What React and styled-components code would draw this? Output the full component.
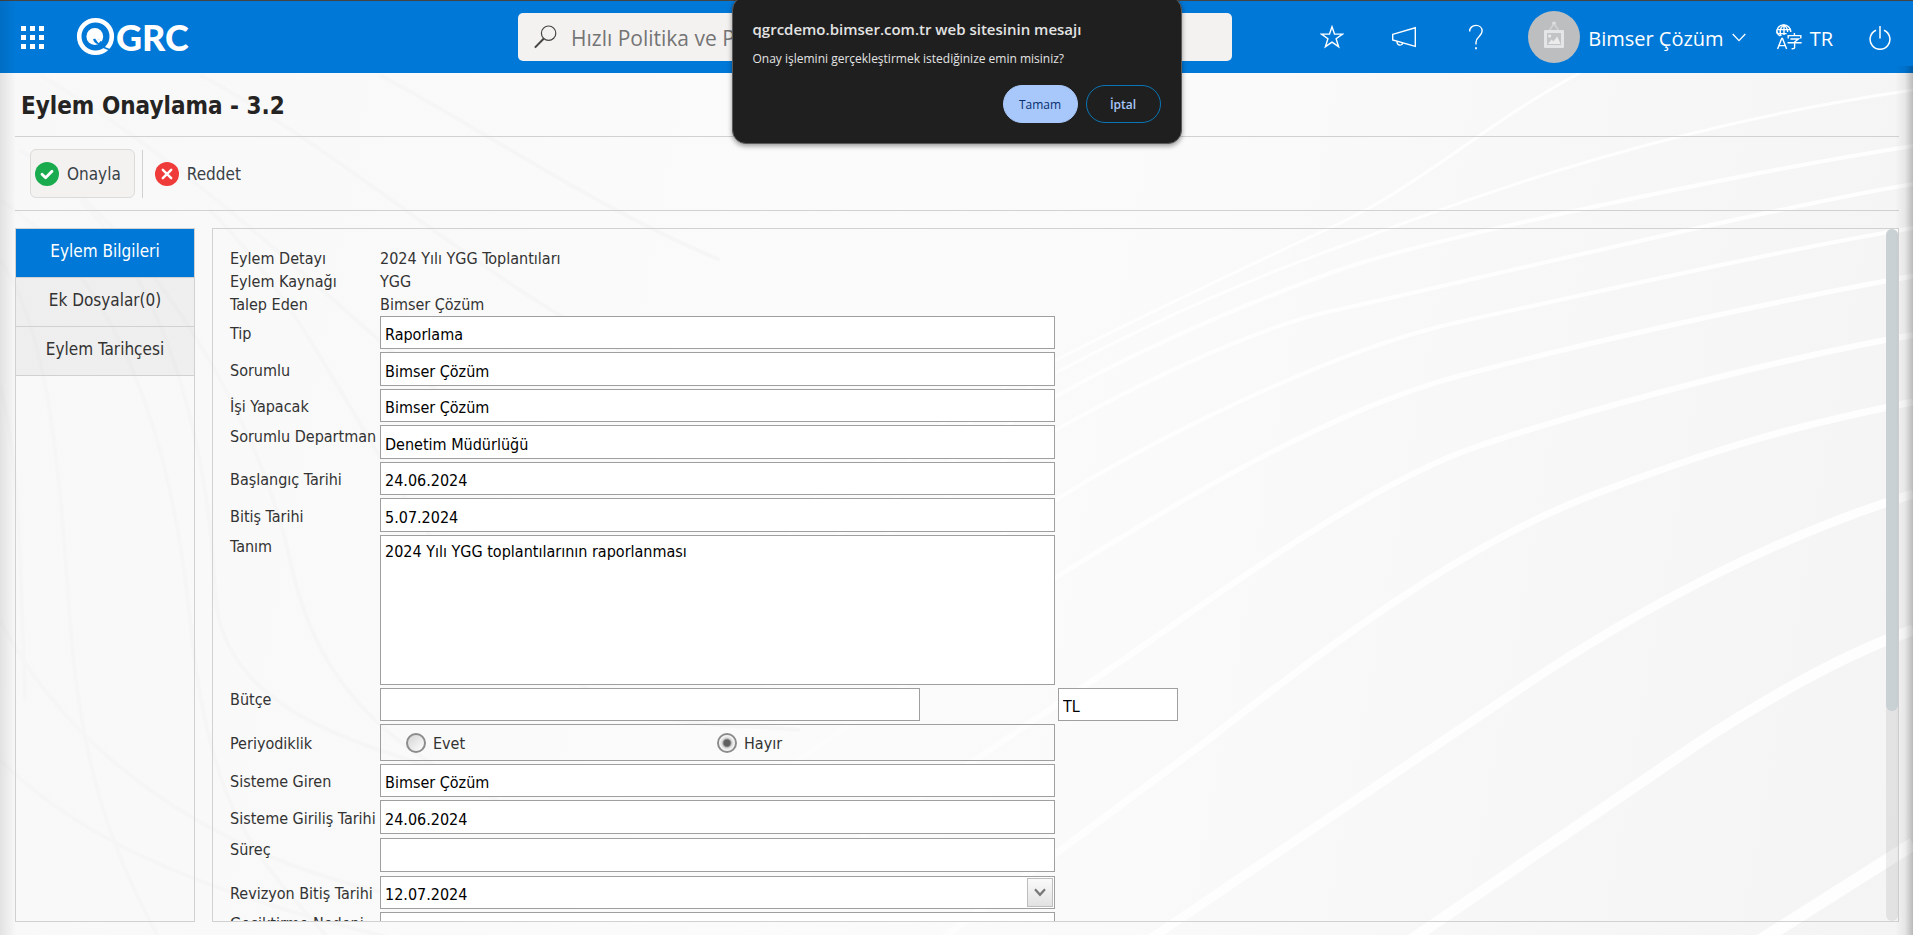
import React, { useEffect, useRef, useState } from "react";
import styled, { createGlobalStyle } from "styled-components";

const formFont = `"DejaVu Sans Condensed", Tahoma, "Noto Sans", sans-serif`;
const uiFont = `"Open Sans", "Segoe UI", "Noto Sans", sans-serif`;

const tabs = ["Eylem Bilgileri", "Ek Dosyalar(0)", "Eylem Tarihçesi"];

const details = [
  { label: "Eylem Detayı", value: "2024 Yılı YGG Toplantıları" },
  { label: "Eylem Kaynağı", value: "YGG" },
  { label: "Talep Eden", value: "Bimser Çözüm" },
];

const fields = [
  { id: "tip", label: "Tip", value: "Raporlama" },
  { id: "sorumlu", label: "Sorumlu", value: "Bimser Çözüm", tall: true },
  { id: "yapacak", label: "İşi Yapacak", value: "Bimser Çözüm" },
  { id: "departman", label: "Sorumlu Departman", value: "Denetim Müdürlüğü", tall: true, top: true },
  { id: "baslangic", label: "Başlangıç Tarihi", value: "24.06.2024" },
  { id: "bitis", label: "Bitiş Tarihi", value: "5.07.2024", tall: true },
];

// light waves on the right, faint grey ones on the left
const waves = [
  { d: "M1060 1000L1518 690C1640 607 1780 535 1913 494", w: 9 },
  { d: "M1320 1002L1700 742C1780 690 1850 652 1913 630", w: 11 },
  { d: "M1690 985L1913 844", w: 13 },
  { d: "M880 985L1200 746C1330 645 1460 545 1595 494S1800 425 1913 402", w: 7 },
  { d: "M760 905L1123 660C1250 570 1380 480 1473 448S1760 362 1913 335", w: 6 },
  { d: "M700 830L1060 575C1180 500 1330 410 1459 376S1780 300 1913 276", w: 5 },
  { d: "M640 770L1040 510C1140 445 1330 350 1459 322S1780 250 1913 228", w: 4 },
  { d: "M600 720L1020 450C1120 392 1250 328 1336 310S1760 210 1913 184", w: 4 },
  { d: "M600 690L1000 430C1100 365 1240 305 1336 271S1760 170 1913 146", w: 4 },
  { d: "M600 650L1000 405C1090 350 1220 290 1336 248S1640 130 1913 90", w: 3 },
  { d: "M620 610L1000 390C1090 340 1250 265 1336 225S1490 120 1580 73", w: 3 },
];

const shades = [
  "M0 200C110 270 170 420 190 620S260 860 330 940",
  "M20 150C150 230 260 420 290 560S400 760 560 830",
  "M0 260C50 330 60 480 70 620S110 850 160 940",
  "M0 385C20 460 20 560 25 700",
  "M80 200C180 300 210 480 215 590S330 740 480 780",
  "M210 210C330 330 380 500 500 620S700 720 800 730",
  "M0 620C60 740 200 860 420 900",
  "M0 760C90 850 230 900 400 940",
  "M40 75C200 170 330 300 470 420",
  "M200 75C340 150 470 270 620 350",
  "M380 75C500 140 600 210 720 260",
];

function StarIcon() {
  return (
    <svg width="24" height="24" viewBox="0 0 24 24" fill="none" stroke="currentColor" strokeWidth="1.4">
      <path d="M12 1.8l2.5 7.3h8l-6.4 4.6 2.5 8L12 17.2l-6.6 4.5 2.5-8L1.5 9.1h8z" />
    </svg>
  );
}

function MegaphoneIcon() {
  return (
    <svg width="26" height="24" viewBox="0 0 26 24" fill="none" stroke="currentColor" strokeWidth="1.4">
      <path d="M1.7 9.3L24.3 2.8v18.6L1.7 15z" />
      <path d="M6.2 16.4a2.9 2.9 0 1 0 5.6 1.6" />
    </svg>
  );
}

function QuestionIcon() {
  return (
    <svg width="24" height="26" viewBox="0 0 24 26" fill="none" stroke="currentColor" strokeWidth="1.4">
      <path d="M5.6 7.4c0-3.4 2.7-6 6.3-6 3.5 0 6.2 2.3 6.2 5.6 0 2.9-1.7 4.3-3.4 6-1.8 1.7-2.7 2.9-2.7 5.2v2.2" />
      <path d="M12 23.2v2" strokeWidth="1.8" />
    </svg>
  );
}

function PictureIcon() {
  return (
    <svg width="22" height="32" viewBox="0 0 22 32">
      <circle cx="11" cy="2.500" r="2" fill="#dedfe0" />
      <path d="M11 3L6.500 9M11 3l4.500 6" stroke="#d2d3d4" strokeWidth="1.600" fill="none" />
      <rect x="1" y="9" width="20" height="18" rx="1" fill="#e4e5e6" />
      <rect x="4" y="12" width="14" height="12" fill="#c3c4c5" />
      <path d="M5 23l3.600-4.400 1.800 1.800 3.800-5 3.400 7.600z" fill="#ececed" />
      <circle cx="6.700" cy="15" r="1.500" fill="#ececed" />
    </svg>
  );
}

function LanguageIcon() {
  return (
    <svg width="26" height="26" viewBox="0 0 26 26" fill="none" stroke="currentColor" strokeWidth="1.4">
      <path d="M1 9.5A7 7 0 1 1 14.8 8M4.2 12A7 7 0 0 1 1 7.5" />
      <path d="M1 5.6h13.6M1.2 9.6h9.4M8 1v10M5 12C3.6 8 4.2 3.4 8 1c2.4 1.6 3.6 4 3.6 7" />
      <path d="M1.6 25L5.7 14.4h.8L10.6 25M3 21.6h6.2" />
      <path d="M18.4 9v2.6M12.2 14.6v-3h12.6v3M14.4 15h8l-3.8 3v5.4c0 1-.6 1.4-3 1.3M11.6 18.8h14" />
    </svg>
  );
}

function PowerIcon() {
  return (
    <svg width="22" height="28" viewBox="0 -2 22 28" fill="none" stroke="currentColor" strokeWidth="1.5">
      <path d="M11 1v12.5M7 5.3a9.9 9.9 0 1 0 8 0" />
    </svg>
  );
}

function SearchIcon() {
  return (
    <svg width="23" height="24" viewBox="0 0 23 24" fill="none" stroke="#444" strokeWidth="1.2">
      <circle cx="14.6" cy="8.2" r="7.2" />
      <path d="M9.6 13.8L.9 22.6" strokeWidth="2" />
    </svg>
  );
}

function App() {
  const [activeTab, setActiveTab] = useState(0);
  const [periodic, setPeriodic] = useState("hayir");
  const [showDialog, setShowDialog] = useState(true);
  const [thumb, setThumb] = useState({ top: 0, height: 70 });
  const scrollRef = useRef(null);

  const updateThumb = () => {
    const el = scrollRef.current;
    setThumb({
      top: (el.scrollTop / el.scrollHeight) * 100,
      height: (el.clientHeight / el.scrollHeight) * 100,
    });
  };

  useEffect(() => {
    updateThumb();
    window.addEventListener("resize", updateThumb);
    return () => window.removeEventListener("resize", updateThumb);
  }, []);

  return (
    <Page>
      <GlobalStyle />
      <Backdrop viewBox="0 0 1913 935" preserveAspectRatio="none" aria-hidden="true">
        <defs>
          <linearGradient id="waveFade" gradientUnits="userSpaceOnUse" x1="650" y1="0" x2="1150" y2="0">
            <stop offset="0" stopColor="#fff" stopOpacity="0" />
            <stop offset="1" stopColor="#fff" stopOpacity="0.9" />
          </linearGradient>
        </defs>
        {shades.map((d) => (
          <path key={d} d={d} stroke="#f6f6f6" strokeWidth="4" />
        ))}
        {waves.map((wave) => (
          <path key={wave.d} d={wave.d} stroke="url(#waveFade)" strokeWidth={wave.w} />
        ))}
      </Backdrop>

      <Header>
        <HeaderStart>
          <IconButton aria-label="Menü">
            <svg width="23" height="23" viewBox="0 0 23 23" fill="currentColor">
              {[0, 9, 18].map((y) => [0, 9, 18].map((x) => <rect key={x + "-" + y} x={x} y={y} width="5" height="5" />))}
            </svg>
          </IconButton>
          <Logo href="#">
            <svg width="40" height="40" viewBox="0 0 40 40" aria-hidden="true">
              <circle cx="19.5" cy="19.5" r="16.3" fill="none" stroke="#fff" strokeWidth="4.6" />
              <circle cx="18.8" cy="19.5" r="8.4" fill="#fff" />
              <path d="M17 22.2c2.600-1 5.600-.4 7.600 1.600l4.600 4.800-2 2.600-4.600-4c-2.600-.4-4.800-2-5.600-5z" fill="#0078d7" />
              <path d="M19 21.600l6.600 1.400-3 3.200z" fill="#fff" />
              <path d="M28 30.500l5.500 2.200" stroke="#0078d7" strokeWidth="1.500" />
            </svg>
            <span>GRC</span>
          </Logo>
        </HeaderStart>
        <SearchBox>
          <SearchIcon />
          <input aria-label="Arama" placeholder="Hızlı Politika ve Prosedür" />
        </SearchBox>
        <HeaderEnd>
          <IconButton $wide aria-label="Favoriler"><StarIcon /></IconButton>
          <IconButton $wide aria-label="Duyurular"><MegaphoneIcon /></IconButton>
          <IconButton $wide aria-label="Yardım"><QuestionIcon /></IconButton>
          <UserButton>
            <Avatar><PictureIcon /></Avatar>
            <HeaderText>Bimser Çözüm</HeaderText>
            <svg width="14" height="9" viewBox="0 0 14 9" fill="none" stroke="currentColor" strokeWidth="1.3">
              <path d="M.7 1L7 7.6 13.3 1" />
            </svg>
          </UserButton>
          <LanguageButton>
            <LanguageIcon />
            <HeaderText>TR</HeaderText>
          </LanguageButton>
          <IconButton aria-label="Çıkış"><PowerIcon /></IconButton>
        </HeaderEnd>
      </Header>

      <Main>
        <Title>Eylem Onaylama - 3.2</Title>
        <Toolbar>
          <ToolButton $active onClick={() => setShowDialog(true)}>
            <svg width="24" height="24" viewBox="0 0 24 24" fill="none">
              <circle cx="12" cy="12" r="12" fill="#1bab4f" />
              <path d="M7 12.2l3.6 3.6 6.4-6.6" stroke="#fff" strokeWidth="2.8" strokeLinecap="round" strokeLinejoin="round" />
            </svg>
            Onayla
          </ToolButton>
          <Separator />
          <ToolButton>
            <svg width="24" height="24" viewBox="0 0 24 24" fill="none">
              <circle cx="12" cy="12" r="12" fill="#ef3b39" />
              <path d="M7.8 7.8l8.400 8.400M16.2 7.8l-8.400 8.400" stroke="#fff" strokeWidth="2.4" strokeLinecap="round" />
            </svg>
            Reddet
          </ToolButton>
        </Toolbar>

        <Content>
          <Sidebar>
            {tabs.map((tab, index) => (
              <TabButton key={tab} $active={index === activeTab} onClick={() => setActiveTab(index)}>
                {tab}
              </TabButton>
            ))}
          </Sidebar>

          <Panel>
            <PanelScroll ref={scrollRef} onScroll={updateThumb}>
              {details.map((detail) => (
                <DetailRow key={detail.label}>
                  <span>{detail.label}</span>
                  <span>{detail.value}</span>
                </DetailRow>
              ))}
              <Form onSubmit={(e) => e.preventDefault()}>
                {fields.map((field) => (
                  <Row key={field.id}>
                    <Label htmlFor={field.id} $top={field.top}>{field.label}</Label>
                    <TextInput id={field.id} $tall={field.tall} defaultValue={field.value} />
                  </Row>
                ))}
                <Row>
                  <Label htmlFor="tanim" $top>Tanım</Label>
                  <TextArea id="tanim" defaultValue="2024 Yılı YGG toplantılarının raporlanması" />
                </Row>
                <Row>
                  <Label htmlFor="butce" $top>Bütçe</Label>
                  <TextInput id="butce" $short />
                  <TextInput aria-label="Para birimi" defaultValue="TL" />
                </Row>
                <Row>
                  <Label as="span" id="periyodiklik">Periyodiklik</Label>
                  <RadioBox role="radiogroup" aria-labelledby="periyodiklik">
                    <RadioLabel>
                      <Radio name="periyodik" checked={periodic === "evet"} onChange={() => setPeriodic("evet")} />
                      Evet
                    </RadioLabel>
                    <RadioLabel>
                      <Radio name="periyodik" checked={periodic === "hayir"} onChange={() => setPeriodic("hayir")} />
                      Hayır
                    </RadioLabel>
                  </RadioBox>
                </Row>
                <Row>
                  <Label htmlFor="giren">Sisteme Giren</Label>
                  <TextInput id="giren" defaultValue="Bimser Çözüm" />
                </Row>
                <Row>
                  <Label htmlFor="giris">Sisteme Giriliş Tarihi</Label>
                  <TextInput id="giris" $tall defaultValue="24.06.2024" />
                </Row>
                <Row $spaced>
                  <Label htmlFor="surec" $top>Süreç</Label>
                  <TextInput id="surec" $tall />
                </Row>
                <Row>
                  <Label htmlFor="revizyon">Revizyon Bitiş Tarihi</Label>
                  <ComboBox>
                    <input id="revizyon" defaultValue="12.07.2024" />
                    <button type="button" aria-label="Tarih seç">
                      <svg width="12" height="9" viewBox="0 0 12 9" fill="none" stroke="#777" strokeWidth="2.2">
                        <path d="M1 1.2l5 5.6 5-5.6" />
                      </svg>
                    </button>
                  </ComboBox>
                </Row>
                <Row>
                  <Label htmlFor="neden" $top>Geciktirme Nedeni</Label>
                  <TextArea id="neden" $large />
                </Row>
              </Form>
            </PanelScroll>
            <ScrollTrack>
              <ScrollThumb style={{ height: thumb.height + "%", marginTop: (thumb.top * (scrollRef.current?.clientHeight || 0)) / 100 }} />
            </ScrollTrack>
          </Panel>
        </Content>
      </Main>

      <EdgeShadow />

      {showDialog && (
        <Dialog role="dialog" aria-labelledby="dialog-title">
          <h2 id="dialog-title">qgrcdemo.bimser.com.tr web sitesinin mesajı</h2>
          <p>Onay işlemini gerçekleştirmek istediğinize emin misiniz?</p>
          <DialogActions>
            <DialogButton $primary onClick={() => setShowDialog(false)}>Tamam</DialogButton>
            <DialogButton onClick={() => setShowDialog(false)}>İptal</DialogButton>
          </DialogActions>
        </Dialog>
      )}
    </Page>
  );
}

export default App;

const GlobalStyle = createGlobalStyle`
  * {
    box-sizing: border-box;
  }

  body {
    margin: 0;
    font-family: ${formFont};
    font-size: 16px;
    color: #333;
  }

  button, input, textarea {
    font: inherit;
  }
`;

const Page = styled.div`
  position: relative;
  display: flex;
  flex-direction: column;
  height: 100vh;
  overflow: hidden;
  background: linear-gradient(100deg, #f8f8f8 0%, #fbfbfb 45%, #fafafa 60%, #f4f4f4 100%);
`;

const Backdrop = styled.svg`
  position: absolute;
  inset: 0;
  width: 100%;
  height: 100%;
  fill: none;
`;

const EdgeShadow = styled.div`
  position: absolute;
  inset: 0;
  pointer-events: none;
  background:
    linear-gradient(to right, rgba(0, 0, 0, 0.09), transparent) left / 16px 100% no-repeat,
    linear-gradient(to left, rgba(0, 0, 0, 0.24), rgba(0, 0, 0, 0.06) 8px, transparent) right bottom / 18px calc(100% - 66px) no-repeat;
`;

const Header = styled.header`
  position: relative;
  display: grid;
  grid-template-columns: 518fr 714fr 681fr;
  align-items: center;
  flex: none;
  height: 73px;
  border-top: 1px solid #444;
  background: #0078d7;
  color: #fff;
  font-family: ${uiFont};
`;

const HeaderStart = styled.div`
  display: flex;
  align-items: center;
  gap: 32px;
  padding-left: 21px;
`;

const Logo = styled.a`
  display: flex;
  align-items: center;
  color: #fff;
  text-decoration: none;
  font-family: Lato, ${uiFont};
  font-size: 36px;
  font-weight: 900;
  line-height: 40px;
`;

const SearchBox = styled.div`
  display: flex;
  align-items: center;
  gap: 14px;
  height: 48px;
  padding: 0 16px;
  border-radius: 5px;
  background: #f3f2f1;

  input {
    flex: 1;
    min-width: 0;
    padding: 2px 0 0;
    border: 0;
    outline: 0;
    background: none;
    font-size: 21px;
  }

  input::placeholder {
    color: #757575;
  }
`;

const HeaderEnd = styled.div`
  display: flex;
  align-items: center;
  justify-content: flex-end;
  padding-right: 22px;
`;

const HeaderText = styled.span`
  padding-top: 2px;
  font-size: 20px;
`;

const IconButton = styled.button`
  display: flex;
  align-items: center;
  justify-content: center;
  width: ${(props) => (props.$wide ? "72px" : "auto")};
  padding: 0;
  border: 0;
  background: none;
  color: inherit;
  cursor: pointer;
`;

const UserButton = styled(IconButton)`
  gap: 8px;
  margin: 0 30px 0 16px;
`;

const LanguageButton = styled(IconButton)`
  gap: 8px;
  margin-right: 36px;
`;

const Avatar = styled.span`
  display: flex;
  align-items: center;
  justify-content: center;
  width: 52px;
  height: 52px;
  border-radius: 50%;
  background: #bdbec0;
`;

const Main = styled.main`
  position: relative;
  display: flex;
  flex-direction: column;
  flex: 1;
  min-height: 0;
  padding: 0 14px 13px 15px;
`;

const Title = styled.h1`
  margin: 0;
  padding: 4px 6px 0;
  border-bottom: 1px solid #d1d1d1;
  color: #252423;
  font-size: 24px;
  line-height: 59px;
`;

const Toolbar = styled.div`
  display: flex;
  align-items: center;
  gap: 7px;
  padding: 12px 15px;
  border-bottom: 1px solid #d1d1d1;
`;

const ToolButton = styled.button`
  display: flex;
  align-items: center;
  gap: 8px;
  height: 49px;
  padding: 0 13px 0 4px;
  border: 1px solid ${(props) => (props.$active ? "#dcdbda" : "transparent")};
  border-radius: 6px;
  background: ${(props) => (props.$active ? "#f3f2f1" : "none")};
  color: #394146;
  font-size: 17px;
  cursor: pointer;
`;

const Separator = styled.span`
  width: 1px;
  height: 48px;
  background: #d1d1d1;
`;

const Content = styled.div`
  display: grid;
  grid-template-columns: 180px minmax(0, 1fr);
  gap: 17px;
  flex: 1;
  min-height: 0;
  margin-top: 17px;
`;

const Sidebar = styled.nav`
  border: 1px solid #d1d1d1;
`;

const TabButton = styled.button`
  display: block;
  width: 100%;
  height: 49px;
  padding: 0 0 4px;
  border: 0;
  border-bottom: 1px solid #d1d1d1;
  background: ${(props) => (props.$active ? "#0078d7" : "rgba(0, 0, 0, 0.04)")};
  color: ${(props) => (props.$active ? "#fff" : "#333")};
  font-size: 17px;
  cursor: pointer;
`;

const Panel = styled.section`
  display: flex;
  min-height: 0;
  border: 1px solid #d1d1d1;
`;

const PanelScroll = styled.div`
  flex: 1;
  min-width: 0;
  padding: 18px 17px;
  overflow-y: auto;
  scrollbar-width: none;
`;

const ScrollTrack = styled.div`
  flex: none;
  width: 12px;
  border-radius: 6px;
  background: rgba(0, 0, 0, 0.07);
`;

const ScrollThumb = styled.div`
  border-radius: 6px;
  background: #c9d1d5;
`;

const Row = styled.div`
  display: grid;
  grid-template-columns: 147px minmax(0, 675px) 120px;
  column-gap: 3px;
  padding: ${(props) => (props.$spaced ? "1px 0" : 0)};
`;

const DetailRow = styled(Row)`
  line-height: 23px;
`;

const Form = styled.form`
  display: grid;
  row-gap: 3px;
`;

const Label = styled.label`
  align-self: ${(props) => (props.$top ? "start" : "center")};
  padding-top: ${(props) => (props.$top ? 0 : "2px")};
  line-height: 23px;
  white-space: nowrap;
`;

const TextInput = styled.input`
  width: ${(props) => (props.$short ? "80%" : "100%")};
  height: ${(props) => (props.$tall ? "34px" : "33px")};
  padding: 4px 4px 0;
  border: 1px solid #9f9f9f;
  background: #fff;
  color: #000;
`;

const TextArea = styled.textarea`
  display: block;
  width: 100%;
  height: ${(props) => (props.$large ? "292px" : "150px")};
  padding: 6px 4px;
  border: 1px solid #9f9f9f;
  background: #fff;
  color: #000;
  resize: none;
`;

const RadioBox = styled.div`
  display: grid;
  grid-template-columns: 48% 1fr;
  align-items: center;
  height: 37px;
  padding: 1px 0 0 25px;
  border: 1px solid #9f9f9f;
`;

const RadioLabel = styled.label`
  display: flex;
  align-items: center;
  gap: 7px;
`;

const Radio = styled.input.attrs({ type: "radio" })`
  appearance: none;
  width: 20px;
  height: 20px;
  margin: 0;
  border: 2px solid #8c8c8c;
  border-radius: 50%;
  background: linear-gradient(135deg, #d4d4d4, #fff);

  &:checked {
    background: radial-gradient(circle, #606060 3px, #d9d9d9 5px, #fff 8px);
  }
`;

const ComboBox = styled.div`
  display: flex;
  height: 33px;
  padding: 1px;
  border: 1px solid #9f9f9f;
  background: #fff;

  input {
    flex: 1;
    min-width: 0;
    padding: 4px 3px 0;
    border: 0;
    outline: 0;
    background: none;
    color: #000;
  }

  button {
    display: flex;
    align-items: center;
    justify-content: center;
    width: 26px;
    padding: 0;
    border: 1px solid #bdbdbd;
    background: linear-gradient(#fafafa, #e2e2e2);
  }
`;

const Dialog = styled.div`
  position: absolute;
  top: -4px;
  left: 50%;
  width: 450px;
  padding: 22px 20px 20px;
  border: 1px solid #5a5a5a;
  border-radius: 14px;
  background: #1f1f1f;
  color: #e3e3e3;
  box-shadow: 0 2px 5px rgba(0, 0, 0, 0.4);
  font-family: ${uiFont};
  transform: translateX(-50%);

  h2 {
    margin: 0;
    font-size: 15px;
    font-weight: 600;
    line-height: 20px;
  }

  p {
    margin: 10px 0 16px;
    font-size: 12px;
    line-height: 20px;
  }
`;

const DialogActions = styled.div`
  display: flex;
  justify-content: flex-end;
  gap: 8px;
`;

const DialogButton = styled.button`
  width: 75px;
  height: 38px;
  padding: 0;
  border: 1px solid ${(props) => (props.$primary ? "#a8c7fa" : "#0b76b7")};
  border-radius: 19px;
  background: ${(props) => (props.$primary ? "#a8c7fa" : "none")};
  color: ${(props) => (props.$primary ? "#062e6f" : "#a8c7fa")};
  font-size: 12px;
  font-weight: ${(props) => (props.$primary ? 400 : 600)};
  cursor: pointer;
`;
